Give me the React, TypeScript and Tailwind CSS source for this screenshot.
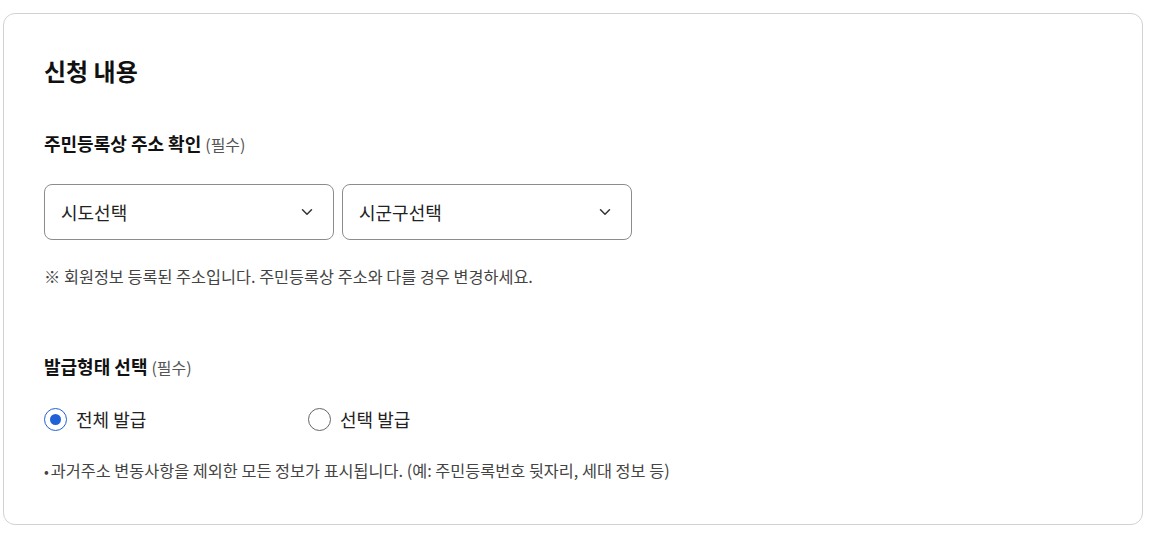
import React from "react";

const font = { fontFamily: '"Noto Sans CJK KR", "Noto Sans", sans-serif' };

function Chevron() {
  return (
    <svg width="12" height="8" viewBox="0 0 12 8" fill="none" className="shrink-0">
      <path d="M1.5 1.8 L6 6.2 L10.5 1.8" stroke="#333" strokeWidth="1.5" strokeLinecap="round" strokeLinejoin="round" />
    </svg>
  );
}

function Select({ label }: { label: string }) {
  return (
    <div className="flex h-[56px] w-[290px] items-center justify-between rounded-[8px] border border-[#8c8c8c] bg-white pl-[16px] pr-[20px]">
      <span className="text-[18px] leading-[24px] text-[#222]">{label}</span>
      <Chevron />
    </div>
  );
}

function Radio({ checked, label }: { checked: boolean; label: string }) {
  return (
    <div className="flex h-[24px] items-center gap-[9px]">
      {checked ? (
        <span className="flex h-[23px] w-[23px] items-center justify-center rounded-full border-[1.5px] border-[#1f62d8]">
          <span className="h-[11px] w-[11px] rounded-full bg-[#1f62d8]" />
        </span>
      ) : (
        <span className="h-[23px] w-[23px] rounded-full border-[1.5px] border-[#666]" />
      )}
      <span className="text-[18px] leading-[24px] text-[#222]">{label}</span>
    </div>
  );
}

export default function App() {
  return (
    <div className="min-h-[534px] bg-white pl-[3px] pt-[13px]" style={font}>
      <div className="flex w-[1140px] flex-col rounded-[12px] border border-[#d2d2d2] bg-white pb-[42px] pl-[40px] pt-[41px]">
        <h1 className="text-[24px] font-bold leading-[32px] text-[#111]">신청 내용</h1>

        <div className="mt-[44px] flex items-baseline gap-[4px]">
          <span className="text-[18px] font-bold leading-[24px] text-[#111]">주민등록상 주소 확인</span>
          <span className="text-[16px] leading-[24px] text-[#555]">(필수)</span>
        </div>

        <div className="mt-[28px] flex gap-[8px]">
          <Select label="시도선택" />
          <Select label="시군구선택" />
        </div>

        <p className="mt-[25px] text-[16.3px] leading-[22px] text-[#444]">
          ※ 회원정보 등록된 주소입니다. 주민등록상 주소와 다를 경우 변경하세요.
        </p>

        <div className="mt-[67px] flex items-baseline gap-[4px]">
          <span className="text-[18px] font-bold leading-[24px] text-[#111]">발급형태 선택</span>
          <span className="text-[16px] leading-[24px] text-[#555]">(필수)</span>
        </div>

        <div className="mt-[28px] flex">
          <div className="w-[264px]">
            <Radio checked label="전체 발급" />
          </div>
          <Radio checked={false} label="선택 발급" />
        </div>

        <p className="mt-[28px] text-[16.3px] leading-[22px] text-[#444]">
          <span className="mr-[2px] text-[14px]">•</span>과거주소 변동사항을 제외한 모든 정보가 표시됩니다. (예: 주민등록번호 뒷자리, 세대 정보 등)
        </p>
      </div>
    </div>
  );
}
